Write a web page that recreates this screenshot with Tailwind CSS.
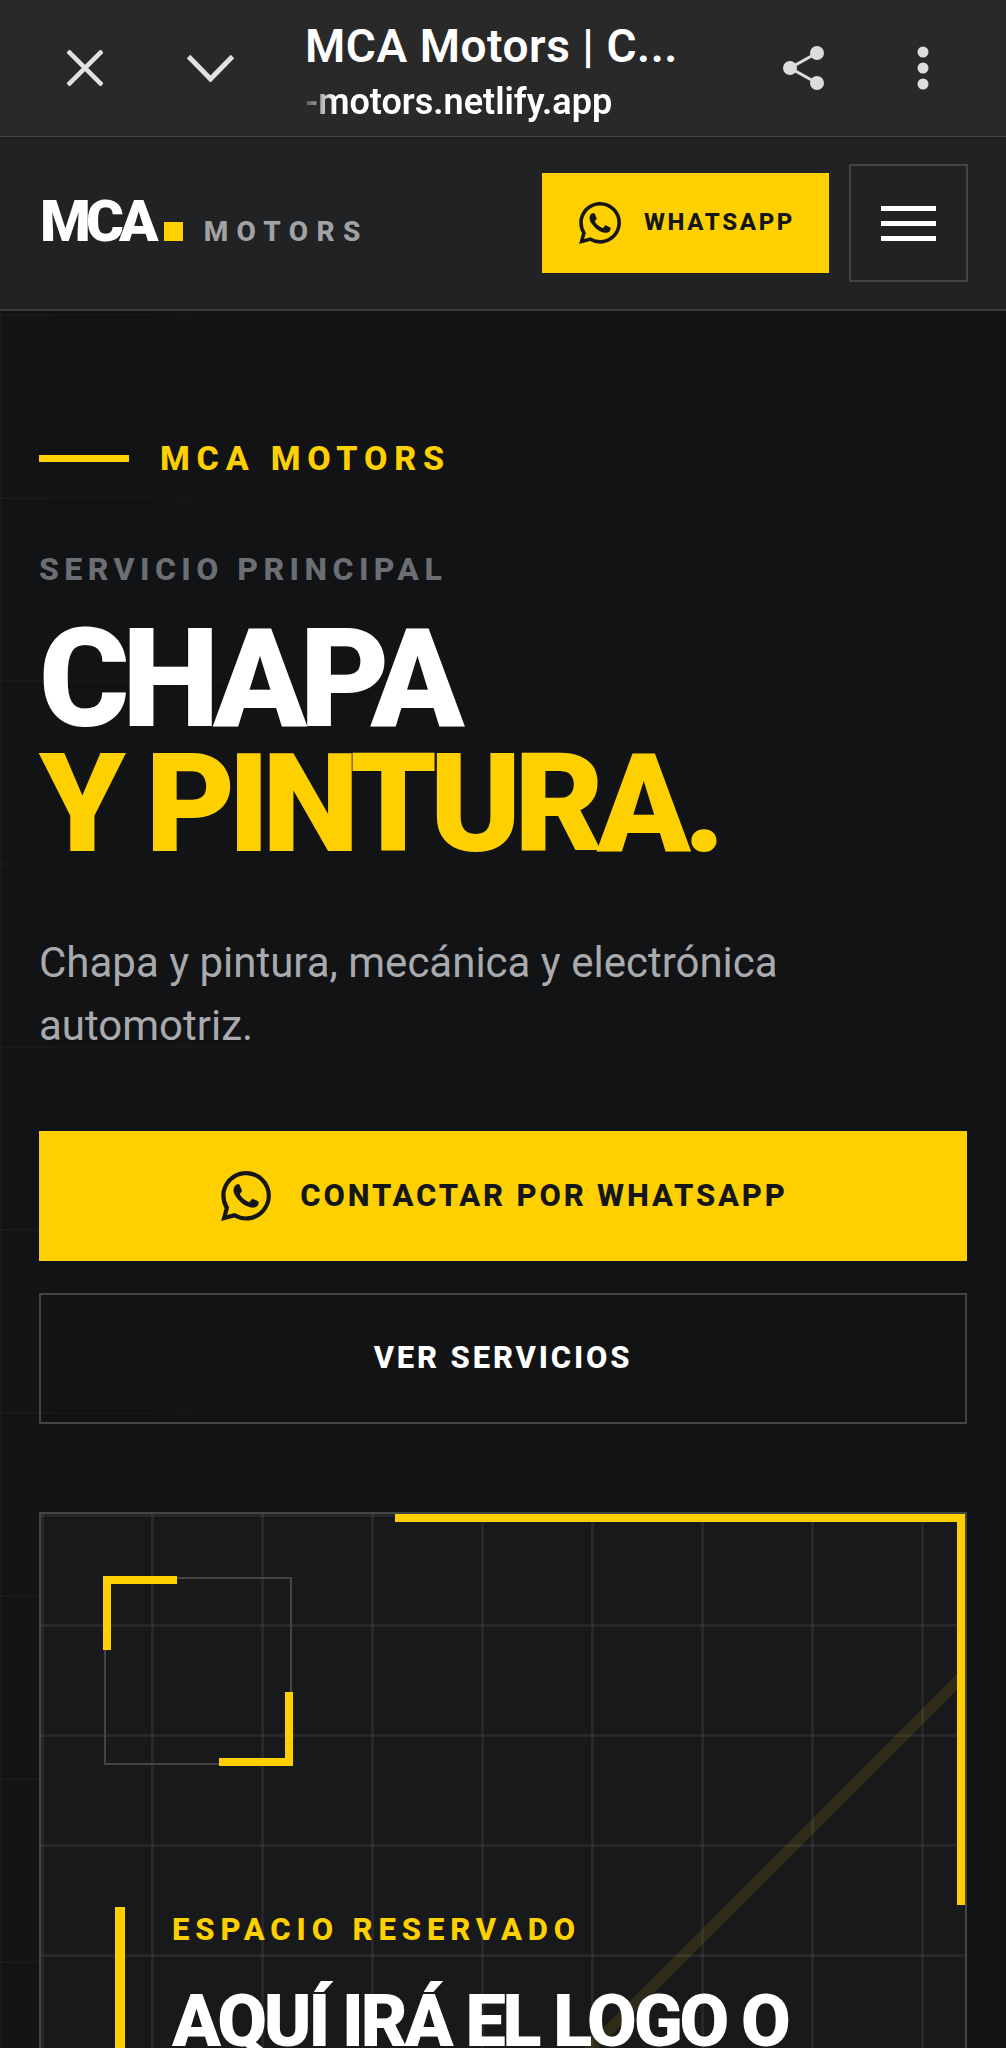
<!DOCTYPE html>
<html lang="es">
<head>
    <meta charset="UTF-8" />
    <meta name="viewport" content="width=device-width, initial-scale=1" />
    <title>MCA Motors</title>
    <script src="https://cdn.jsdelivr.net/npm/@tailwindcss/browser@4"></script>
</head>
<body class="bg-[#111315] font-[Roboto,sans-serif] h-[2048px] overflow-hidden">

    <!-- Browser bar -->
    <div class="h-[137px] bg-[#292929] border-b border-[#444] flex items-center">
        <svg class="ml-[67px] w-[36px] h-[36px]" viewBox="0 0 36 36" fill="none" stroke="#e2e2e2" stroke-width="4.5"><path d="M1 1 35 35M35 1 1 35"/></svg>
        <svg class="ml-[84px] w-[47px] h-[27px]" viewBox="0 0 47 27" fill="none" stroke="#e2e2e2" stroke-width="5"><path d="M1.5 1.5 23.5 24 45.5 1.5"/></svg>
        <div class="ml-[71px] w-[395px] mt-[8px]">
            <div class="text-white text-[46px] leading-[54px] font-semibold tracking-[0.012em] whitespace-nowrap">MCA Motors | C...</div>
            <div class="mt-[6px] text-white text-[36px] leading-[46px] font-semibold whitespace-nowrap overflow-hidden w-[320px] [mask-image:linear-gradient(90deg,rgba(0,0,0,0.2),black_30px)]">-motors.netlify.app</div>
        </div>
        <svg class="ml-[83px] w-[42px] h-[46px]" viewBox="0 0 42 46" fill="#dcdcdc" stroke="#dcdcdc" stroke-width="3"><circle cx="7" cy="23" r="5.5"/><circle cx="34" cy="8" r="5.5"/><circle cx="34" cy="38" r="5.5"/><path d="M34 8 7 23 34 38" fill="none"/></svg>
        <svg class="ml-[92px] w-[12px] h-[44px]" viewBox="0 0 12 44" fill="#dcdcdc"><circle cx="6" cy="6" r="5.5"/><circle cx="6" cy="22" r="5.5"/><circle cx="6" cy="38" r="5.5"/></svg>
    </div>

    <!-- Navbar -->
    <nav class="h-[174px] bg-[#212224] border-b-2 border-[#3a3b3d] flex items-center pl-[40px] pr-[38px]">
        <a href="#" class="flex items-baseline mt-[-4px]">
            <span class="text-white text-[58px] leading-none font-black tracking-[-0.085em]">MCA</span>
            <span class="w-[19px] h-[19px] bg-[#ffd000] ml-[10px]"></span>
            <span class="text-[#a0a2a4] text-[28px] leading-none font-extrabold tracking-[0.3em] ml-[21px]">MOTORS</span>
        </a>
        <a href="#" class="ml-auto w-[287px] h-[100px] bg-[#ffd000] flex items-center pl-[37px]">
            <svg class="w-[42px] h-[42px]" viewBox="0 0 24 24" fill="#15161a"><path d="M17.472 14.382c-.297-.149-1.758-.867-2.03-.967-.273-.099-.471-.148-.67.15-.197.297-.767.966-.94 1.164-.173.199-.347.223-.644.075-.297-.15-1.255-.463-2.39-1.475-.883-.788-1.48-1.761-1.653-2.059-.173-.297-.018-.458.13-.606.134-.133.298-.347.446-.52.149-.174.198-.298.298-.497.099-.198.05-.371-.025-.52-.075-.149-.669-1.612-.916-2.207-.242-.579-.487-.5-.669-.51-.173-.008-.371-.01-.57-.01-.198 0-.52.074-.792.372-.272.297-1.04 1.016-1.04 2.479 0 1.462 1.065 2.875 1.213 3.074.149.198 2.096 3.2 5.077 4.487.709.306 1.262.489 1.694.625.712.227 1.36.195 1.871.118.571-.085 1.758-.719 2.006-1.413.248-.694.248-1.289.173-1.413-.074-.124-.272-.198-.57-.347m-5.421 7.403h-.004a9.87 9.87 0 01-5.031-1.378l-.361-.214-3.741.982.998-3.648-.235-.374a9.86 9.86 0 01-1.51-5.26c.001-5.45 4.436-9.884 9.888-9.884 2.64 0 5.122 1.03 6.988 2.898a9.825 9.825 0 012.893 6.994c-.003 5.45-4.437 9.884-9.885 9.884m8.413-18.297A11.815 11.815 0 0012.05 0C5.495 0 .16 5.335.157 11.892c0 2.096.547 4.142 1.588 5.945L.057 24l6.305-1.654a11.882 11.882 0 005.683 1.448h.005c6.554 0 11.89-5.335 11.893-11.893a11.821 11.821 0 00-3.48-8.413Z"/></svg>
            <span class="ml-[23px] mb-[3px] text-[#15161a] text-[24px] font-extrabold tracking-[0.11em]">WHATSAPP</span>
        </a>
        <button class="ml-[20px] w-[119px] h-[118px] border-2 border-[#444] flex flex-col items-center justify-center gap-[10px]">
            <span class="block w-[55px] h-[5px] bg-white"></span>
            <span class="block w-[55px] h-[5px] bg-white"></span>
            <span class="block w-[55px] h-[5px] bg-white"></span>
        </button>
    </nav>

    <!-- Hero -->
    <main class="relative px-[39px] pt-[128px] h-[1737px] overflow-hidden">
        <div class="absolute inset-0 bg-[linear-gradient(rgba(255,255,255,0.025)_2px,transparent_2px),linear-gradient(90deg,rgba(255,255,255,0.025)_2px,transparent_2px)] bg-[size:183px_183px] [background-position:0_3px] [mask-image:linear-gradient(90deg,black,transparent_60%)]"></div>

        <div class="relative">
            <div class="flex items-center gap-[31px]">
                <span class="w-[90px] h-[7px] bg-[#ffd000]"></span>
                <span class="text-[#ffd000] text-[34px] leading-[38px] font-extrabold tracking-[0.2em]">MCA MOTORS</span>
            </div>
            <p class="mt-[74px] text-[#6b6e72] text-[32px] leading-[36px] font-extrabold tracking-[0.17em]">SERVICIO PRINCIPAL</p>
            <h1 class="mt-[30px] text-[138px] leading-[125px] font-black tracking-[-0.053em]">
                <span class="block text-white">CHAPA</span>
                <span class="block text-[#ffd000]">Y PINTURA.</span>
            </h1>
            <p class="mt-[64px] text-[#a8aaad] text-[42px] leading-[63px]">Chapa y pintura, mecánica y electrónica automotriz.</p>

            <a href="#" class="mt-[74px] h-[130px] bg-[#ffd000] flex items-center justify-center gap-[29px] pl-[3px]">
                <svg class="w-[50px] h-[50px]" viewBox="0 0 24 24" fill="#15161a"><path d="M17.472 14.382c-.297-.149-1.758-.867-2.03-.967-.273-.099-.471-.148-.67.15-.197.297-.767.966-.94 1.164-.173.199-.347.223-.644.075-.297-.15-1.255-.463-2.39-1.475-.883-.788-1.48-1.761-1.653-2.059-.173-.297-.018-.458.13-.606.134-.133.298-.347.446-.52.149-.174.198-.298.298-.497.099-.198.05-.371-.025-.52-.075-.149-.669-1.612-.916-2.207-.242-.579-.487-.5-.669-.51-.173-.008-.371-.01-.57-.01-.198 0-.52.074-.792.372-.272.297-1.04 1.016-1.04 2.479 0 1.462 1.065 2.875 1.213 3.074.149.198 2.096 3.2 5.077 4.487.709.306 1.262.489 1.694.625.712.227 1.36.195 1.871.118.571-.085 1.758-.719 2.006-1.413.248-.694.248-1.289.173-1.413-.074-.124-.272-.198-.57-.347m-5.421 7.403h-.004a9.87 9.87 0 01-5.031-1.378l-.361-.214-3.741.982.998-3.648-.235-.374a9.86 9.86 0 01-1.51-5.26c.001-5.45 4.436-9.884 9.888-9.884 2.64 0 5.122 1.03 6.988 2.898a9.825 9.825 0 012.893 6.994c-.003 5.45-4.437 9.884-9.885 9.884m8.413-18.297A11.815 11.815 0 0012.05 0C5.495 0 .16 5.335.157 11.892c0 2.096.547 4.142 1.588 5.945L.057 24l6.305-1.654a11.882 11.882 0 005.683 1.448h.005c6.554 0 11.89-5.335 11.893-11.893a11.821 11.821 0 00-3.48-8.413Z"/></svg>
                <span class="text-[#15161a] text-[31px] font-extrabold tracking-[0.092em]">CONTACTAR POR WHATSAPP</span>
            </a>
            <a href="#" class="mt-[32px] h-[131px] border-2 border-[#444] flex items-center justify-center text-white text-[31px] font-extrabold tracking-[0.092em]">VER SERVICIOS</a>

            <!-- Placeholder card -->
            <section class="relative mt-[88px] h-[800px] border-2 border-[#444547] bg-[#17191b] bg-[linear-gradient(rgba(255,255,255,0.06)_3px,transparent_3px),linear-gradient(90deg,rgba(255,255,255,0.06)_3px,transparent_3px)] bg-[size:110px_110px] overflow-hidden">
                <svg class="absolute inset-0 w-full h-full" viewBox="0 0 924 796"><path d="M924 160 284 800" stroke="#ffd000" stroke-opacity="0.1" stroke-width="11"/></svg>
                <div class="absolute right-0 top-0 w-[570px] h-[391px] border-t-8 border-r-8 border-[#ffd000]"></div>

                <div class="absolute left-[63px] top-[63px] w-[188px] h-[188px] border-2 border-[#444]">
                    <div class="absolute -left-[3px] -top-[3px] w-[74px] h-[74px] border-t-8 border-l-8 border-[#ffd000]"></div>
                    <div class="absolute -right-[3px] -bottom-[3px] w-[74px] h-[74px] border-b-8 border-r-8 border-[#ffd000]"></div>
                </div>

                <div class="absolute left-[74px] top-[393px] border-l-[10px] border-[#ffd000] pl-[47px] h-[400px]">
                    <p class="mt-[5px] text-[#ffd000] text-[31px] leading-[36px] font-extrabold tracking-[0.19em] whitespace-nowrap">ESPACIO RESERVADO</p>
                    <h2 class="mt-[34px] text-white text-[72px] leading-[80px] font-black tracking-[-0.043em] whitespace-nowrap">AQUÍ IRÁ EL LOGO O</h2>
                </div>
            </section>
        </div>
    </main>
</body>
</html>
